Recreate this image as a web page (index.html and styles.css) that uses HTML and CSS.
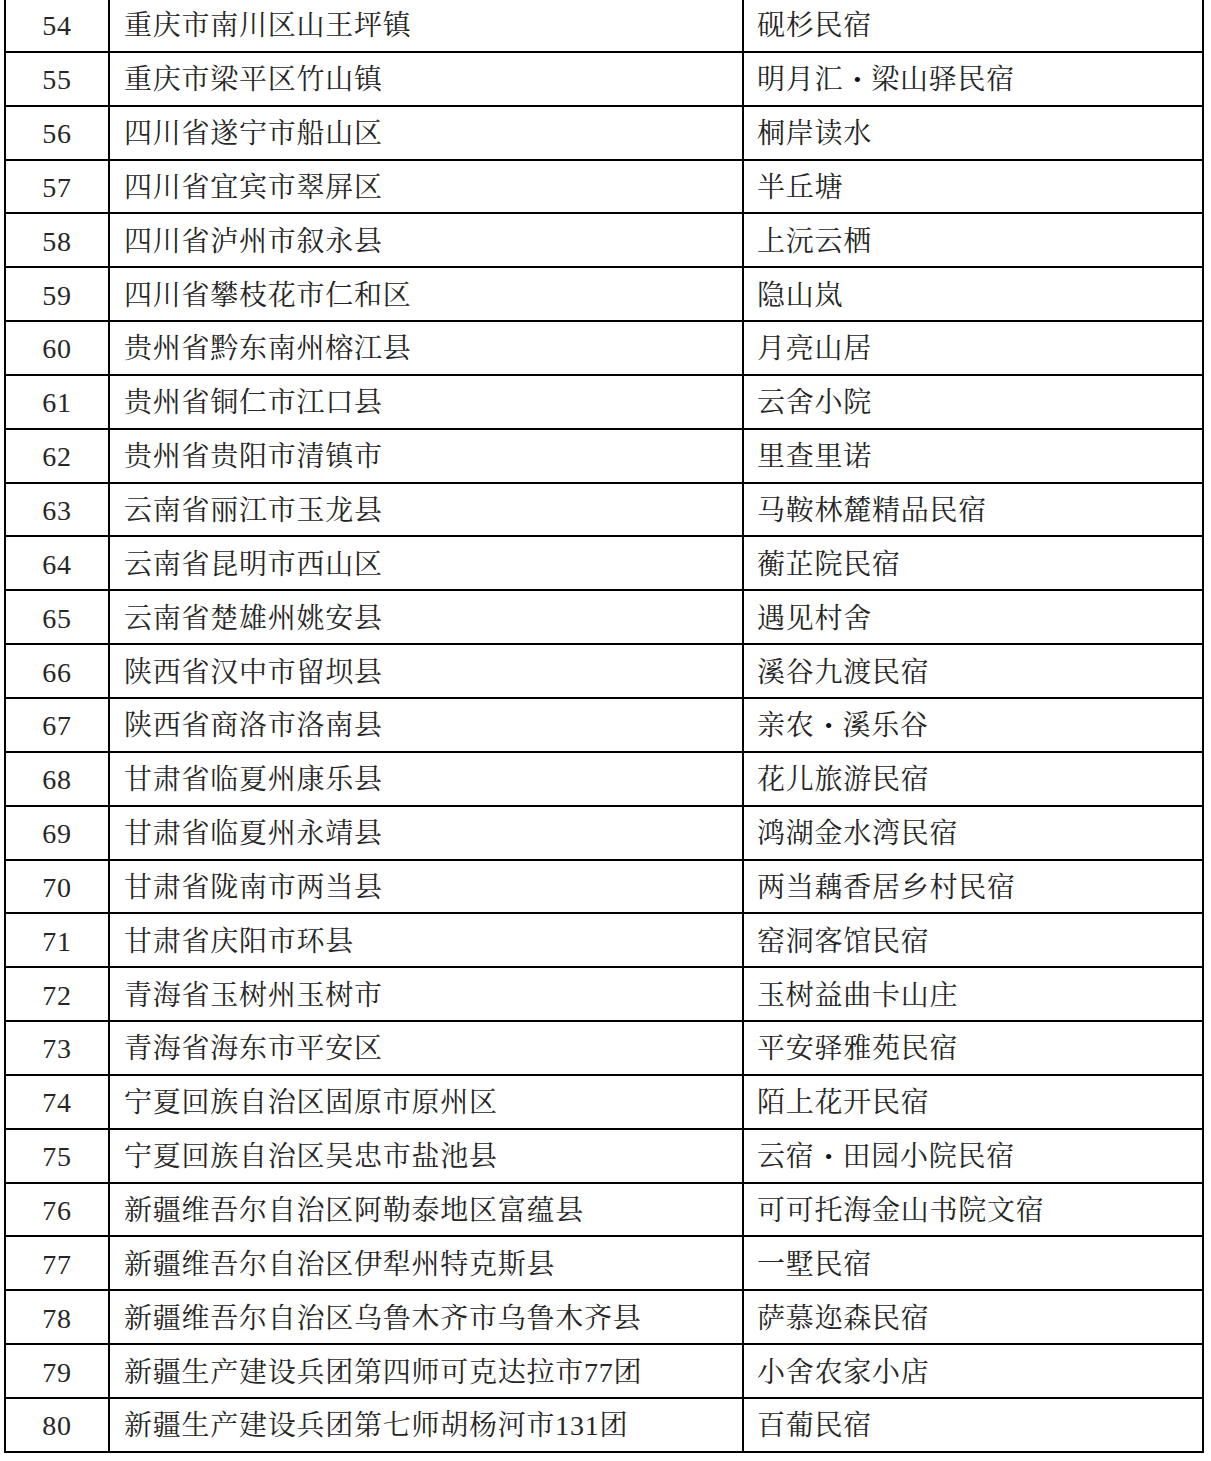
FILE: index.html
```html
<!DOCTYPE html>
<html lang="zh-CN">
<head>
<meta charset="utf-8">
<title>民宿名单</title>
<link rel="stylesheet" href="styles.css">
</head>
<body>
<div class="sheet">
  <div class="row"><div class="num">54</div><div class="loc">重庆市南川区山王坪镇</div><div class="name">砚杉民宿</div></div>
  <div class="row"><div class="num">55</div><div class="loc">重庆市梁平区竹山镇</div><div class="name">明月汇<span class="dot">•</span>梁山驿民宿</div></div>
  <div class="row"><div class="num">56</div><div class="loc">四川省遂宁市船山区</div><div class="name">桐岸读水</div></div>
  <div class="row"><div class="num">57</div><div class="loc">四川省宜宾市翠屏区</div><div class="name">半丘塘</div></div>
  <div class="row"><div class="num">58</div><div class="loc">四川省泸州市叙永县</div><div class="name">上沅云栖</div></div>
  <div class="row"><div class="num">59</div><div class="loc">四川省攀枝花市仁和区</div><div class="name">隐山岚</div></div>
  <div class="row"><div class="num">60</div><div class="loc">贵州省黔东南州榕江县</div><div class="name">月亮山居</div></div>
  <div class="row"><div class="num">61</div><div class="loc">贵州省铜仁市江口县</div><div class="name">云舍小院</div></div>
  <div class="row"><div class="num">62</div><div class="loc">贵州省贵阳市清镇市</div><div class="name">里查里诺</div></div>
  <div class="row"><div class="num">63</div><div class="loc">云南省丽江市玉龙县</div><div class="name">马鞍林麓精品民宿</div></div>
  <div class="row"><div class="num">64</div><div class="loc">云南省昆明市西山区</div><div class="name">蘅芷院民宿</div></div>
  <div class="row"><div class="num">65</div><div class="loc">云南省楚雄州姚安县</div><div class="name">遇见村舍</div></div>
  <div class="row"><div class="num">66</div><div class="loc">陕西省汉中市留坝县</div><div class="name">溪谷九渡民宿</div></div>
  <div class="row"><div class="num">67</div><div class="loc">陕西省商洛市洛南县</div><div class="name">亲农<span class="dot">•</span>溪乐谷</div></div>
  <div class="row"><div class="num">68</div><div class="loc">甘肃省临夏州康乐县</div><div class="name">花儿旅游民宿</div></div>
  <div class="row"><div class="num">69</div><div class="loc">甘肃省临夏州永靖县</div><div class="name">鸿湖金水湾民宿</div></div>
  <div class="row"><div class="num">70</div><div class="loc">甘肃省陇南市两当县</div><div class="name">两当藕香居乡村民宿</div></div>
  <div class="row"><div class="num">71</div><div class="loc">甘肃省庆阳市环县</div><div class="name">窑洞客馆民宿</div></div>
  <div class="row"><div class="num">72</div><div class="loc">青海省玉树州玉树市</div><div class="name">玉树益曲卡山庄</div></div>
  <div class="row"><div class="num">73</div><div class="loc">青海省海东市平安区</div><div class="name">平安驿雅苑民宿</div></div>
  <div class="row"><div class="num">74</div><div class="loc">宁夏回族自治区固原市原州区</div><div class="name">陌上花开民宿</div></div>
  <div class="row"><div class="num">75</div><div class="loc">宁夏回族自治区吴忠市盐池县</div><div class="name">云宿<span class="dot">•</span>田园小院民宿</div></div>
  <div class="row"><div class="num">76</div><div class="loc">新疆维吾尔自治区阿勒泰地区富蕴县</div><div class="name">可可托海金山书院文宿</div></div>
  <div class="row"><div class="num">77</div><div class="loc">新疆维吾尔自治区伊犁州特克斯县</div><div class="name">一墅民宿</div></div>
  <div class="row"><div class="num">78</div><div class="loc">新疆维吾尔自治区乌鲁木齐市乌鲁木齐县</div><div class="name">萨慕迩森民宿</div></div>
  <div class="row"><div class="num">79</div><div class="loc">新疆生产建设兵团第四师可克达拉市77团</div><div class="name">小舍农家小店</div></div>
  <div class="row"><div class="num">80</div><div class="loc">新疆生产建设兵团第七师胡杨河市131团</div><div class="name">百葡民宿</div></div>
</div>
</body>
</html>
```

FILE: styles.css
```css
html, body {
  margin: 0;
  padding: 0;
  background: #ffffff;
}

body {
  font-family: "Liberation Serif", "Noto Serif CJK SC", "Noto Sans CJK SC", serif;
  color: #262626;
  font-size: 28px;
}

.sheet {
  margin: -3px 0 0 4px;
  width: 1200px;
  box-sizing: border-box;
  border-top: 2px solid #000;
  border-left: 2px solid #000;
  display: grid;
  grid-auto-rows: 53.85px;
}

.row {
  display: grid;
  grid-template-columns: 104px 634px 460px;
  border-bottom: 2px solid #000;
  box-sizing: border-box;
}

.row > div {
  border-right: 2px solid #000;
  display: flex;
  align-items: center;
  white-space: nowrap;
  letter-spacing: 0.75px;
  line-height: 1;
  padding-top: 3px;
  box-sizing: border-box;
}

.num {
  justify-content: center;
  letter-spacing: 0;
}

.loc {
  padding-left: 14px;
}

.name {
  padding-left: 13px;
}

.dot {
  display: inline-block;
  width: 28px;
  text-align: center;
  font-size: 22px;
  letter-spacing: 0;
  color: #111;
}
```
